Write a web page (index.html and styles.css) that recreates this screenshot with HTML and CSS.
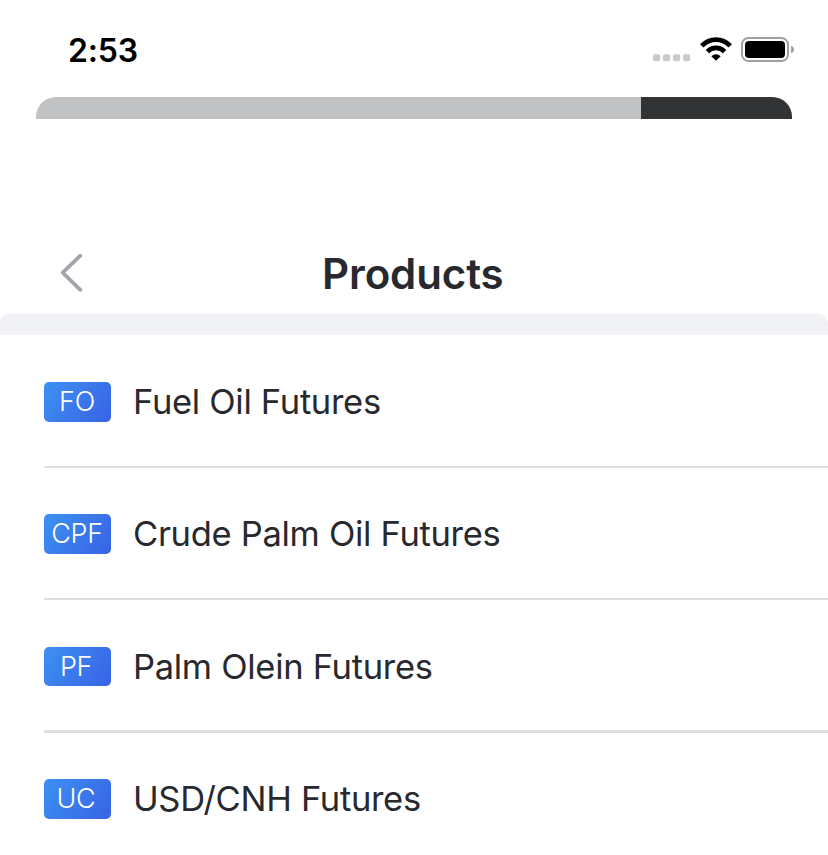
FILE: index.html
```html
<!DOCTYPE html>
<html lang="en">
<head>
<meta charset="utf-8">
<title>Products</title>
<link rel="stylesheet" href="styles.css">
</head>
<body>
<div class="status">
  <time class="clock">2:53</time>
  <div class="signals">
    <svg class="cell" width="38" height="8" viewBox="0 0 38 8" fill="#cacaca"><rect x="0" y=".3" width="7.2" height="7" rx="2"/><rect x="10" y=".3" width="7.2" height="7" rx="2"/><rect x="20" y=".3" width="7.2" height="7" rx="2"/><rect x="30" y=".3" width="7.2" height="7" rx="2"/></svg>
    <svg class="wifi" width="32" height="24" viewBox="0 0 32 24"><g fill="none" stroke="#000" stroke-width="4.8"><path d="M1.8 8.9C9.6 .5 22.4 .5 30.2 8.9"/><path d="M7.4 14.6C12.2 9.7 19.8 9.7 24.6 14.6"/></g><path d="M16 23.8L11.3 19.2Q16 15.2 20.7 19.2Z"/></svg>
    <svg class="battery" width="53" height="26" viewBox="0 0 53 26"><rect x="1" y="1" width="46" height="23" rx="6.5" fill="none" stroke="#a0a0a0" stroke-width="2"/><rect x="4" y="4" width="40" height="17" rx="4" fill="#000"/><path d="M50 8.7Q53 9.7 53 12.5Q53 15.3 50 16.3Z" fill="#a0a0a0"/></svg>
  </div>
</div>
<div class="sheet"><div class="sheet-end"></div></div>
<header class="header">
  <svg class="back" width="24" height="42" viewBox="0 0 24 42" fill="none" stroke="#a3a3ab" stroke-width="3.8" stroke-linecap="round" stroke-linejoin="round"><path d="M20.3 3.7L2.7 20.6L20.3 37.8"/></svg>
  <h1 class="title">Products</h1>
</header>
<div class="band"></div>
<ul class="list">
  <li class="row"><span class="badge">FO</span><span class="name">Fuel Oil Futures</span></li>
  <li class="row second"><span class="badge">CPF</span><span class="name">Crude Palm Oil Futures</span></li>
  <li class="row third"><span class="badge">PF</span><span class="name">Palm Olein Futures</span></li>
  <li class="row last"><span class="badge">UC</span><span class="name">USD/CNH Futures</span></li>
</ul>
</body>
</html>
```
FILE: styles.css
```css
* { box-sizing: border-box; }
body {
  margin: 0;
  height: 855px;
  overflow: hidden;
  background: #fff;
  color: #28292e;
  font-family: Inter, "Liberation Sans", sans-serif;
}
svg { display: block; }
.status {
  display: flex;
  justify-content: space-between;
  height: 97px;
  padding: 30px 34px 0 68px;
}
.clock {
  margin-top: 1px;
  font-size: 32px;
  line-height: 40px;
  font-weight: 600;
  letter-spacing: -.2px;
  color: #000;
}
.signals { display: flex; }
.cell { margin: 24px 9px 0 0; }
.wifi { margin: 7px 9px 0 0; }
.battery { margin-top: 7px; }
.sheet {
  display: flex;
  justify-content: flex-end;
  height: 22px;
  margin: 0 36px;
  overflow: hidden;
  border-radius: 20px 20px 0 0;
  background: #c1c2c4;
}
.sheet-end {
  width: 151px;
  background: #323335;
}
.header {
  display: flex;
  height: 194px;
  padding: 133px 0 0 60px;
}
.title {
  margin: -3px 0 0 238px;
  font-size: 42px;
  line-height: 50px;
  font-weight: 600;
  letter-spacing: -.1px;
  white-space: nowrap;
}
.band {
  height: 22px;
  border-top: 1px solid #f8f8fa;
  border-radius: 10px 10px 0 0;
  background: #f1f2f6;
}
.list {
  margin: 0;
  padding: 0 0 0 44px;
  list-style: none;
}
.row {
  display: flex;
  align-items: flex-start;
  height: 133px;
  padding-top: 47px;
  border-bottom: 2px solid #dfdfe1;
}
.second { height: 132px; padding-top: 46px; }
.third { border-bottom-width: 3px; }
.last { height: 122px; padding-top: 46px; border: 0; }
.badge {
  width: 67px;
  height: 40px;
  padding-right: 1px;
  border-radius: 5px;
  background: linear-gradient(125deg, #3d91f2, #3862e5);
  color: #fff;
  font-size: 27px;
  font-weight: 300;
  line-height: 39px;
  letter-spacing: -.3px;
  text-align: center;
}
.third .badge { height: 39px; padding-right: 3px; }
.last .badge { padding-right: 3px; }
.name {
  margin-left: 22px;
  font-size: 34.5px;
  line-height: 40px;
  letter-spacing: -.3px;
  white-space: nowrap;
}
```
